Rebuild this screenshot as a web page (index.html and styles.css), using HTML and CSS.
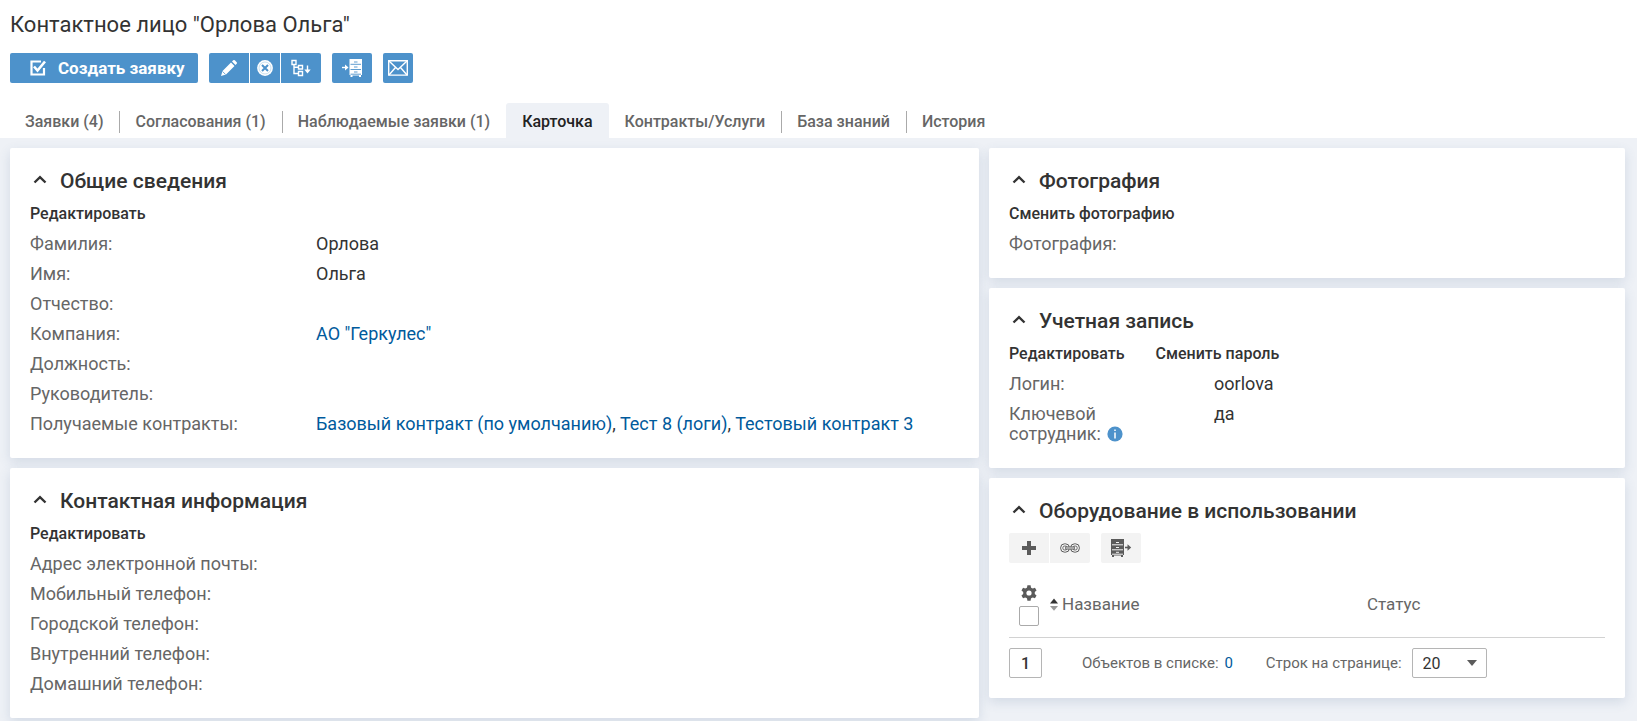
FILE: index.html
```
<!DOCTYPE html>
<html lang="ru">
<head>
<meta charset="utf-8">
<title>Контактное лицо "Орлова Ольга"</title>
<link rel="stylesheet" href="styles.css">
</head>
<body>
<header class="page-header">
  <h1 class="page-title">Контактное лицо "Орлова Ольга"</h1>
  <div class="toolbar">
    <button class="btn btn-create" type="button">
      <svg width="16" height="16" viewBox="0 0 16 16" fill="none" stroke="currentColor"><path d="M11 1.500H1.500v13h12.500V8" stroke-width="2.200"/><path d="M4 6.500l3.500 4 7.500-9" stroke-width="2.600"/></svg>
      <span>Создать заявку</span>
    </button>
    <div class="btn-group">
      <button class="btn btn-wide" type="button" aria-label="Редактировать"><svg width="18" height="18" viewBox="0 0 18 18" fill="currentColor"><path d="M1 17l1.500-5L11 3.500 14.500 7 6 15.500zM12 2.500l1.200-1.200a1.200 1.200 0 0 1 1.600 0l1.900 1.900a1.200 1.200 0 0 1 0 1.600L15.500 6z"/><path d="M2.600 12.500l3 3" stroke="#4d92cb" stroke-width=".8"/></svg></button>
      <button class="btn btn-icon" type="button" aria-label="Удалить"><svg width="16" height="16" viewBox="0 0 16 16"><circle cx="8" cy="8" r="7.900" fill="#fff"/><circle cx="8" cy="8" r="6" fill="none" stroke="#b9d5ea" stroke-width=".8"/><path d="M5 5l6 6M11 5l-6 6" stroke="#4d92cb" stroke-width="2"/></svg></button>
      <button class="btn btn-wide" type="button" aria-label="Переместить"><svg width="20" height="18" viewBox="0 0 20 18" fill="none" stroke="currentColor" stroke-width="1.400"><path d="M1 1.500h4v4H1zM7.500 6.500h4v3.500h-4zM7.500 12.500h4v4h-4zM3 5.500v9h4.500M3 8.300h4.500M16.500 6.500v6"/><path d="M13.300 10.500h6.400l-3.200 4z" fill="currentColor" stroke="none"/></svg></button>
    </div>
    <button class="btn btn-wide" type="button" aria-label="Связать с оборудованием"><svg width="22" height="18" viewBox="0 0 22 18"><path d="M1 8.500h4" stroke="#fff" stroke-width="1.400"/><path d="M4 5.500l3.500 3L4 11.500z" fill="#fff"/><path d="M8.500 0h12.500v16h-1v2h-2v-1.500h-6.500V18h-2v-2h-1z" fill="#fff"/><path d="M9.500 5.300h10.500M9.500 10.500h10.500M9.500 15.200h10.500M13 3h3.500M13 8h3.500M13 13h3.500" stroke="#4d92cb" stroke-width=".9"/></svg></button>
    <button class="btn btn-icon" type="button" aria-label="Написать письмо"><svg width="20" height="16" viewBox="0 0 20 16" fill="none" stroke="currentColor" stroke-width="1.400"><path d="M.7.700h18.600v14.400H.7z"/><path d="M1 1l9 8.500L19 1M1 15l6.500-7.500M19 15l-6.500-7.500"/></svg></button>
  </div>
  <nav class="tabs">
    <a class="tab" href="#requests">Заявки (4)</a>
    <a class="tab" href="#approvals">Согласования (1)</a>
    <a class="tab" href="#watched">Наблюдаемые заявки (1)</a>
    <a class="tab tab-active" href="#card" aria-current="page">Карточка</a>
    <a class="tab" href="#contracts">Контракты/Услуги</a>
    <a class="tab" href="#knowledge">База знаний</a>
    <a class="tab" href="#history">История</a>
  </nav>
</header>
<main class="content">
  <div class="column">
    <section class="panel">
      <h2 class="panel-title"><svg class="chevron" width="14" height="12" viewBox="0 0 14 12"><path d="M1.500 7.500L7 2.200l5.500 5.300"/></svg>Общие сведения</h2>
      <div class="actions"><a href="#edit">Редактировать</a></div>
      <dl class="fields">
        <dt>Фамилия:</dt><dd>Орлова</dd>
        <dt>Имя:</dt><dd>Ольга</dd>
        <dt>Отчество:</dt><dd></dd>
        <dt>Компания:</dt><dd><a href="#company">АО "Геркулес"</a></dd>
        <dt>Должность:</dt><dd></dd>
        <dt>Руководитель:</dt><dd></dd>
        <dt>Получаемые контракты:</dt><dd><a href="#c1">Базовый контракт (по умолчанию)</a>, <a href="#c2">Тест 8 (логи)</a>, <a href="#c3">Тестовый контракт 3</a></dd>
      </dl>
    </section>
    <section class="panel">
      <h2 class="panel-title"><svg class="chevron" width="14" height="12" viewBox="0 0 14 12"><path d="M1.500 7.500L7 2.200l5.500 5.300"/></svg>Контактная информация</h2>
      <div class="actions"><a href="#edit-contacts">Редактировать</a></div>
      <dl class="fields">
        <dt>Адрес электронной почты:</dt><dd></dd>
        <dt>Мобильный телефон:</dt><dd></dd>
        <dt>Городской телефон:</dt><dd></dd>
        <dt>Внутренний телефон:</dt><dd></dd>
        <dt>Домашний телефон:</dt><dd></dd>
      </dl>
    </section>
  </div>
  <div class="column">
    <section class="panel">
      <h2 class="panel-title"><svg class="chevron" width="14" height="12" viewBox="0 0 14 12"><path d="M1.500 7.500L7 2.200l5.500 5.300"/></svg>Фотография</h2>
      <div class="actions"><a href="#photo">Сменить фотографию</a></div>
      <dl class="fields fields-narrow">
        <dt>Фотография:</dt><dd></dd>
      </dl>
    </section>
    <section class="panel">
      <h2 class="panel-title"><svg class="chevron" width="14" height="12" viewBox="0 0 14 12"><path d="M1.500 7.500L7 2.200l5.500 5.300"/></svg>Учетная запись</h2>
      <div class="actions"><a href="#edit-account">Редактировать</a><a href="#password">Сменить пароль</a></div>
      <dl class="fields fields-narrow">
        <dt>Логин:</dt><dd>oorlova</dd>
        <dt>Ключевой<br>сотрудник: <svg class="info" width="16" height="16" viewBox="0 0 16 16"><circle cx="8" cy="8" r="7.600" fill="#4d92cb"/><path d="M8 6.500v6M8 3.500v1.600" stroke="#fff" stroke-width="1.500"/></svg></dt><dd>да</dd>
      </dl>
    </section>
    <section class="panel">
      <h2 class="panel-title"><svg class="chevron" width="14" height="12" viewBox="0 0 14 12"><path d="M1.500 7.500L7 2.200l5.500 5.300"/></svg>Оборудование в использовании</h2>
      <div class="tools">
        <div class="btn-group">
          <button class="btn btn-wide btn-grey" type="button" aria-label="Добавить"><svg width="14" height="14" viewBox="0 0 14 14"><path d="M7 0v14M0 7h14" stroke="currentColor" stroke-width="4"/></svg></button>
          <button class="btn btn-wide btn-grey" type="button" aria-label="Связать"><svg width="20" height="10" viewBox="0 0 20 10" fill="none" stroke="currentColor"><rect x=".6" y=".8" width="8.800" height="8.400" rx="4"/><rect x="10.600" y=".8" width="8.800" height="8.400" rx="4"/><rect x="2.800" y="3" width="4.400" height="4" rx="1.800" stroke-width=".9"/><rect x="12.800" y="3" width="4.400" height="4" rx="1.800" stroke-width=".9"/><path d="M5 5h10" stroke-width="3"/><path d="M5.500 5h9" stroke="#f3f3f3" stroke-width="1"/></svg></button>
        </div>
        <button class="btn btn-wide btn-grey" type="button" aria-label="Передать оборудование"><svg width="22" height="18" viewBox="0 0 22 18"><path d="M1 0h13v16h-1v2h-2v-1.500H4V18H2v-2H1z" fill="currentColor"/><path d="M2 5.800h11M2 10.800h11M2 15.200h11M6 3.500h3M6 8.500h3M6 13.300h3" stroke="#f3f3f3"/><path d="M15 8.500h4" stroke="currentColor" stroke-width="1.600"/><path d="M17.500 5.200l3.700 3.300-3.700 3.300z" fill="currentColor"/></svg></button>
      </div>
      <table class="list">
        <thead>
          <tr>
            <th class="list-select">
              <button class="gear" type="button" aria-label="Настроить список"><svg width="16" height="16" viewBox="-8 -8 16 16"><g fill="#5b5b5b"><circle r="5.800"/><path d="M-2.200-4l.6-3.800h3.200L2.200-4zM-2.200 4l.6 3.800h3.200L2.200 4z"/><path transform="rotate(60)" d="M-2.200-4l.6-3.800h3.200L2.200-4zM-2.200 4l.6 3.800h3.200L2.200 4z"/><path transform="rotate(120)" d="M-2.200-4l.6-3.800h3.200L2.200-4zM-2.200 4l.6 3.800h3.200L2.200 4z"/></g><circle r="2.600" fill="#fff"/></svg></button>
              <input class="check" type="checkbox" aria-label="Выбрать все">
            </th>
            <th class="list-name"><svg class="sort" width="8" height="13" viewBox="0 0 8 13"><path d="M0 5.500L4 .5l4 5z" fill="#333"/><path d="M0 8h8l-4 4.800z" fill="#999"/></svg>Название</th>
            <th class="list-status">Статус</th>
          </tr>
        </thead>
      </table>
      <div class="pager">
        <button class="page-number" type="button">1</button>
        <span class="total">Объектов в списке: <a href="#all">0</a></span>
        <label class="rows-label" for="rows">Строк на странице:</label>
        <span class="select-box">
          <select class="rows" id="rows"><option>20</option><option>50</option><option>100</option></select>
          <svg class="arrow" width="10" height="6" viewBox="0 0 10 6"><path d="M0 0h10L5 6z" fill="#5b5b5b"/></svg>
        </span>
      </div>
    </section>
  </div>
</main>
</body>
</html>
```
FILE: styles.css
```
* { box-sizing: border-box; }
body {
  margin: 0;
  min-height: 100vh;
  background: #eef1f6;
  color: #333;
  font: 18px/20px Roboto, "Liberation Sans", sans-serif;
}
a { color: #005a9c; text-decoration: none; }
svg { display: block; flex: none; }
button, select { font-family: inherit; }

.page-header { background: #fff; padding: 10px 12px 0 10px; }
.page-title { margin: 0; font-size: 22px; line-height: 30px; font-weight: 400; }

.toolbar { display: flex; gap: 11px; margin-top: 13px; }
.btn-group { display: flex; gap: 1px; }
.btn {
  display: flex;
  align-items: center;
  justify-content: center;
  height: 30px;
  padding: 0;
  border: 0;
  border-radius: 2px;
  background: #4d92cb;
  color: #fff;
}
.btn-group .btn { border-radius: 0; }
.btn-group .btn:first-child { border-radius: 2px 0 0 2px; }
.btn-group .btn:last-child { border-radius: 0 2px 2px 0; }
.btn-wide { width: 40px; }
.btn-icon { width: 30px; }
.btn-create { gap: 12px; min-width: 187px; padding: 0 13px 0 20px; font-size: 17px; font-weight: 700; }
.btn-grey { background: #f3f3f3; color: #5b5b5b; }

.tabs { display: flex; margin: 20px 0 0 -1px; }
.tab {
  position: relative;
  height: 35px;
  padding: 0 16px;
  color: #666;
  font-size: 16px;
  line-height: 37px;
  font-weight: 500;
}
.tab:not(.tab-active) + .tab:not(.tab-active)::before {
  content: "";
  position: absolute;
  left: 0;
  top: 8px;
  width: 1px;
  height: 22px;
  background: #aaa;
}
.tab-active { border-radius: 3px 3px 0 0; background: #eef1f6; color: #222; }

.content { display: grid; grid-template-columns: 60% 1fr; gap: 10px; padding: 10px 12px 3px 10px; }
.column { display: flex; flex-direction: column; gap: 10px; min-width: 0; }
.panel {
  padding: 20px;
  border-radius: 2px;
  background: #fff;
  box-shadow: 0 4px 12px rgba(70, 100, 140, .16);
}
.panel-title {
  display: flex;
  align-items: center;
  gap: 13px;
  margin: 0;
  padding-left: 3px;
  font-size: 21px;
  line-height: 26px;
  font-weight: 500;
}
.chevron { fill: none; stroke: #333; stroke-width: 2.400; }
.actions { display: flex; gap: 31px; padding: 10px 0 4px; font-size: 16px; font-weight: 500; }
.actions a { color: #333; }
.fields { display: grid; grid-template-columns: 286px 1fr; margin: 0; }
.fields-narrow { grid-template-columns: 205px 1fr; }
.fields dt, .fields dd { min-height: 30px; margin: 0; padding: 6px 0 4px; }
.fields dt { color: #666; }
.info { display: inline-block; margin-left: 2px; vertical-align: -2px; }

.tools { display: flex; gap: 11px; padding-top: 9px; }
.list { width: 100%; margin-top: 20px; border-collapse: collapse; border-bottom: 1px solid #d2d2d2; table-layout: fixed; }
.list th { padding: 11px 0 0; color: #666; font-size: 17px; font-weight: 400; text-align: left; vertical-align: top; }
.list .list-select { width: 41px; padding: 2px 0 11px 10px; }
.list-name { width: 317px; }
.sort { display: inline-block; margin-right: 4px; vertical-align: -1px; }
.gear { display: block; margin: 0 0 5px 2px; padding: 0; border: 0; background: none; }
.check {
  display: block;
  appearance: none;
  width: 20px;
  height: 20px;
  margin: 0;
  border: 1px solid #aaa;
  border-radius: 2px;
  background: #fff;
}
.pager { display: flex; align-items: center; padding-top: 10px; color: #666; font-size: 15px; }
.page-number {
  width: 33px;
  height: 30px;
  margin-right: 40px;
  padding: 0;
  border: 1px solid #b5b5b5;
  border-radius: 2px;
  background: #fff;
  color: #333;
  font-size: 16px;
  font-weight: 500;
}
.total { margin-right: 33px; }
.total a { margin-left: 2px; }
.rows-label { margin-right: 10px; }
.select-box { display: grid; align-items: center; }
.select-box > * { grid-area: 1 / 1; }
.rows {
  appearance: none;
  width: 75px;
  height: 30px;
  padding: 0 10px;
  border: 1px solid #b5b5b5;
  border-radius: 2px;
  background: #fff;
  color: #333;
  font-size: 16px;
}
.arrow { justify-self: end; margin-right: 10px; pointer-events: none; }
```
